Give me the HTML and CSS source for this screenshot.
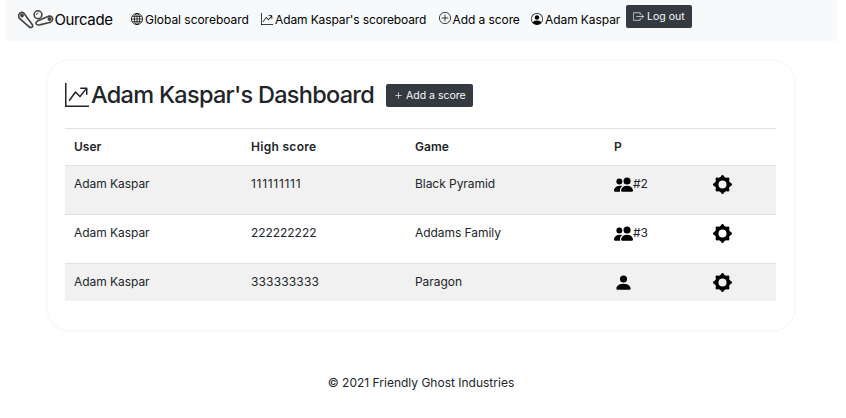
FILE: index.html
```html
<!DOCTYPE html>
<html lang="en">
<head>
<meta charset="utf-8">
<title>Ourcade</title>
<link rel="stylesheet" href="styles.css">
</head>
<body>
<svg class="symbols" aria-hidden="true">
  <symbol id="graph" viewBox="0 0 16 16"><path fill-rule="evenodd" d="M0 0h1v15h15v1H0V0zm10 3.500a.5.5 0 0 1 .5-.5h4a.5.5 0 0 1 .5.5v4a.5.5 0 0 1-1 0V4.900l-3.613 4.417a.5.5 0 0 1-.74.037L7.060 6.767l-3.656 5.027a.5.5 0 0 1-.808-.588l4-5.500a.5.5 0 0 1 .758-.060l2.609 2.610L13.445 4H10.500a.5.5 0 0 1-.5-.5z"/></symbol>
  <symbol id="people" viewBox="0 0 16 16"><path d="M7 14s-1 0-1-1 1-4 5-4 5 3 5 4-1 1-1 1H7zm4-6a3 3 0 1 0 0-6 3 3 0 0 0 0 6z"/><path fill-rule="evenodd" d="M5.216 14A2.238 2.238 0 0 1 5 13c0-1.355.680-2.750 1.936-3.720A6.325 6.325 0 0 0 5 9c-4 0-5 3-5 4s1 1 1 1h4.216z"/><path d="M4.500 8a2.500 2.500 0 1 0 0-5 2.500 2.500 0 0 0 0 5z"/></symbol>
  <symbol id="person" viewBox="0 0 16 16"><path d="M3 14s-1 0-1-1 1-4 6-4 6 3 6 4-1 1-1 1H3zm5-6a3 3 0 1 0 0-6 3 3 0 0 0 0 6z"/></symbol>
  <symbol id="gear" viewBox="0 0 16 16"><g fill="none" stroke="currentColor" stroke-width="2" stroke-linejoin="round"><circle cx="8" cy="8" r="4.850" stroke-width="2.900"/><path d="M8 1 9.850 3.540 12.810 3.190 12.460 6.150 15 8 12.460 9.850 12.810 12.810 9.850 12.460 8 15 6.150 12.460 3.190 12.810 3.540 9.850 1 8 3.540 6.150 3.190 3.190 6.150 3.540Z"/></g></symbol>
</svg>
<nav class="navbar">
  <a class="brand">
    <svg class="logo" viewBox="0 0 36 20" fill="none" stroke="#444" stroke-width="1.600"><path d="M5.700 3.100 14.200 14.400C15.700 17.100 12.700 18.500 10.800 16.600L1.300 8.200C-.9 4.700 3.200.6 5.700 3.100Z"/><circle cx="4" cy="5.500" r="1.100" fill="#333"/><circle cx="20" cy="4.700" r="3.900"/><path d="M18.200 5.100q.2-2 2.200-2.300" stroke-width="1"/><path d="M31.100 6.100 20 10.700C16.500 12.500 17.800 15.700 21.600 14.900L32.500 12.200C36.200 10.500 34.700 5.200 31.100 6.100Z"/><circle cx="31.500" cy="9.100" r="1.200" fill="#333"/></svg>
    <span>Ourcade</span></a>
  <a class="item i-global"><svg viewBox="0 0 16 16" fill="none" stroke="currentColor"><circle cx="8" cy="8" r="7.500"/><ellipse cx="8" cy="8" rx="3.600" ry="7.500"/><path d="M8 .5v15M.5 8h15M1.700 4.500h12.600M1.700 11.500h12.600"/></svg><span>Global scoreboard</span></a>
  <a class="item i-board"><svg><use href="#graph"/></svg><span>Adam Kaspar's scoreboard</span></a>
  <a class="item i-add"><svg viewBox="0 0 16 16" fill="none" stroke="currentColor"><circle cx="8" cy="8" r="7.500"/><path d="M8 4v8M4 8h8" stroke-linecap="round"/></svg><span>Add a score</span></a>
  <a class="item i-user"><svg viewBox="0 0 16 16"><path d="M11 6a3 3 0 1 1-6 0 3 3 0 0 1 6 0z"/><path fill-rule="evenodd" d="M0 8a8 8 0 1 1 16 0A8 8 0 0 1 0 8zm8-7a7 7 0 0 0-5.468 11.370C3.242 11.226 4.805 10 8 10s4.757 1.225 5.468 2.370A7 7 0 0 0 8 1z"/></svg><span>Adam Kaspar</span></a>
  <a class="btn logout"><svg viewBox="0 0 16 16" fill="none" stroke="currentColor" stroke-linecap="round" stroke-linejoin="round"><path d="M10.500 5V2.500h-10v11h10V11M5.500 8h10M12.500 5l3 3-3 3"/></svg><span>Log out</span></a>
</nav>
<main class="card">
  <header class="heading">
    <svg><use href="#graph"/></svg>
    <h1>Adam Kaspar's Dashboard</h1>
    <a class="btn add"><svg viewBox="0 0 16 16" fill="none" stroke="currentColor" stroke-linecap="round"><path d="M8 4v8M4 8h8"/></svg><span>Add a score</span></a>
  </header>
  <table>
    <colgroup><col class="c-user"><col class="c-score"><col class="c-game"><col class="c-p"><col></colgroup>
    <thead><tr><th>User</th><th><span class="high">High score</span></th><th>Game</th><th>P</th><th></th></tr></thead>
    <tbody>
      <tr class="tall"><td>Adam Kaspar</td><td><span class="ones">111111111</span></td><td>Black Pyramid</td><td><div class="players"><svg><use href="#people"/></svg>#2</div></td><td><svg class="gear"><use href="#gear"/></svg></td></tr>
      <tr class="tall"><td>Adam Kaspar</td><td>222222222</td><td>Addams Family</td><td><div class="players"><svg><use href="#people"/></svg>#3</div></td><td><svg class="gear"><use href="#gear"/></svg></td></tr>
      <tr><td>Adam Kaspar</td><td><span class="threes">333333333</span></td><td>Paragon</td><td><div class="players"><svg><use href="#person"/></svg></div></td><td><svg class="gear"><use href="#gear"/></svg></td></tr>
    </tbody>
  </table>
</main>
<footer>© 2021 Friendly Ghost Industries</footer>
</body>
</html>
```
FILE: styles.css
```css
* { box-sizing: border-box; }
body { margin: 0; background: #fff; color: #212529; font: 12px/18px Inter, "Liberation Sans", sans-serif; }
svg { display: block; flex: none; fill: currentColor; }
svg[fill="none"] { fill: none; }
.symbols { position: absolute; width: 0; height: 0; }
.navbar { display: flex; align-items: flex-start; height: 41px; margin: 0 9px 0 5px; padding-left: 13px; background: #f8f9fa; color: #000; white-space: nowrap; }
.brand { display: flex; width: 113px; padding-top: 10px; font-size: 15px; line-height: 20px; letter-spacing: -0.4px; }
.logo { width: 36px; height: 20px; margin-right: 0.5px; }
.item { display: flex; padding-top: 11px; letter-spacing: -0.08px; }
.item svg { width: 12px; height: 12px; margin: 2px 2px 0 0; }
.item.i-add svg { margin: 1px 1.5px 0 0; }
.i-global { width: 130px; letter-spacing: -0.03px; }
.i-board { width: 178px; letter-spacing: -0.12px; }
.i-add { width: 92px; }
.i-user { width: 95px; }
.btn { display: flex; align-items: center; height: 23px; background: #343a40; color: #f8f9fa; border-radius: 2px; font-size: 10.5px; white-space: nowrap; }
.logout { width: 66px; margin-top: 5px; padding-left: 7px; }
.logout svg { width: 11px; height: 11px; margin-right: 3px; }
.card { width: 750px; height: 273px; margin: 18px 0 0 46px; padding: 21px 17px 0; border: 2px solid #f9f9f9; border-radius: 24px; }
.heading { display: flex; height: 46px; white-space: nowrap; }
.heading > svg { width: 24px; height: 24px; margin: 1px 2px 0 0; }
h1 { width: 295px; margin: -1px 0 0; font-size: 23.5px; line-height: 28px; font-weight: 500; letter-spacing: -0.72px; }
.add { width: 87px; margin-top: 2px; padding-left: 7px; }
.add svg { width: 11px; height: 11px; margin-right: 2px; }
table { width: 711px; border-collapse: separate; border-spacing: 0; table-layout: fixed; }
.c-user { width: 177px; }
.c-score { width: 164px; }
.c-game { width: 199px; }
.c-p { width: 98px; }
th, td { height: 37px; padding: 9px 9px 0; border-top: 1px solid #dee2e6; text-align: left; vertical-align: top; line-height: 18px; }
td { height: 38px; letter-spacing: -0.05px; }
.tall td { height: 49px; }
th { font-weight: 600; }
.high { letter-spacing: 0.3px; }
.ones { letter-spacing: 0.7px; }
.threes { letter-spacing: 0.15px; }
tbody tr:nth-child(odd) { background: #f1f1f1; }
.players { display: flex; height: 18px; }
.players svg { width: 19px; height: 19px; color: #000; }
.gear { width: 19px; height: 19px; margin-left: 1px; color: #000; }
footer { margin-top: 42px; padding-right: 4px; text-align: center; }
```
